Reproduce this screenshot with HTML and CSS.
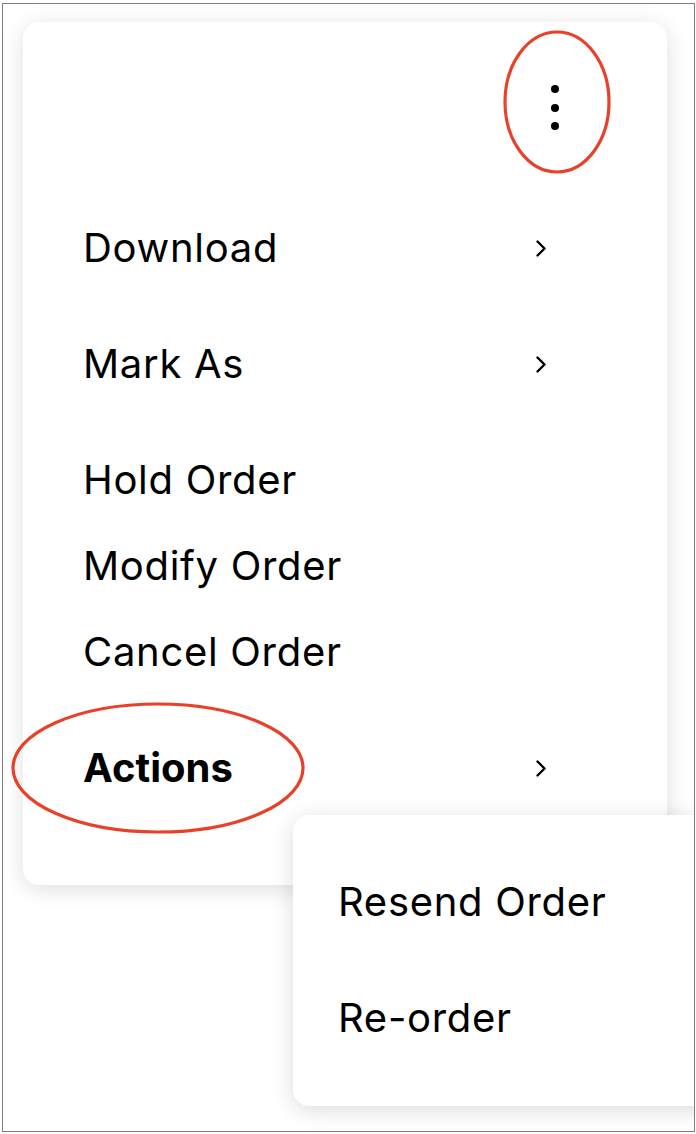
FILE: index.html
```html
<!DOCTYPE html>
<html lang="en">
<head>
<meta charset="utf-8">
<title>Order menu</title>
<link rel="stylesheet" href="styles.css">
</head>
<body>
<div class="frame">
  <div class="menu">
    <div class="menu-head">
      <button class="kebab" aria-label="More options">
        <span class="dot"></span><span class="dot"></span><span class="dot"></span>
      </button>
    </div>
    <ul class="group">
      <li class="row"><span class="label">Download</span><svg class="chev" viewBox="0 0 10 17"><path d="M1.5 1.5 L8.5 8.5 L1.5 15.5"/></svg></li>
      <li class="row"><span class="label">Mark As</span><svg class="chev" viewBox="0 0 10 17"><path d="M1.5 1.5 L8.5 8.5 L1.5 15.5"/></svg></li>
    </ul>
    <ul class="group compact">
      <li class="row"><span class="label">Hold Order</span></li>
      <li class="row"><span class="label">Modify Order</span></li>
      <li class="row"><span class="label">Cancel Order</span></li>
    </ul>
    <ul class="group">
      <li class="row active"><span class="label">Actions</span><svg class="chev" viewBox="0 0 10 17"><path d="M1.5 1.5 L8.5 8.5 L1.5 15.5"/></svg></li>
    </ul>
  </div>
  <ul class="submenu">
    <li class="row"><span class="label">Resend Order</span></li>
    <li class="row"><span class="label">Re-order</span></li>
  </ul>
  <svg class="marks" viewBox="0 0 691 1127">
    <ellipse cx="554" cy="98" rx="52" ry="70"/>
    <ellipse cx="155" cy="764" rx="145" ry="64"/>
  </svg>
</div>
</body>
</html>
```

FILE: styles.css
```css
* { box-sizing: border-box; }
html, body { margin: 0; padding: 0; background: #fff; }
body { font-family: Inter, "Noto Sans", sans-serif; color: #000; }

.frame {
  position: relative;
  margin: 3px 0 0 2px;
  width: 693px;
  height: 1129px;
  border: 1px solid #7f7f7f;
  background: #fff;
  overflow: hidden;
}

.menu {
  margin: 18px 0 0 20px;
  width: 644px;
  height: 863px;
  background: #fff;
  border-radius: 16px;
  box-shadow: 0 4px 22px rgba(0, 0, 0, 0.13);
  padding: 0 0 59px 0;
}

.menu-head {
  display: flex;
  justify-content: flex-end;
  padding: 63px 100px 0 0;
  height: 168px;
}

.kebab {
  display: flex;
  flex-direction: column;
  align-items: center;
  gap: 10.5px;
  width: 24px;
  height: 45px;
  padding: 0;
  border: 0;
  background: transparent;
}
.kebab .dot {
  width: 8px;
  height: 8px;
  border-radius: 50%;
  background: #000;
}

ul { list-style: none; margin: 0; padding: 0; }

.group .row {
  display: flex;
  align-items: center;
  justify-content: space-between;
  height: 116px;
  padding: 0 121px 0 60px;
}
.group.compact { padding: 15px 0; }
.group.compact .row { height: 86px; }

.label {
  font-size: 40px;
  line-height: 48px;
  font-weight: 400;
  letter-spacing: 0.7px;
}
.row.active .label { font-weight: 700; letter-spacing: 0; }

.chev {
  width: 10px;
  height: 17px;
  fill: none;
  stroke: #000;
  stroke-width: 2.4;
  stroke-linecap: round;
  stroke-linejoin: round;
}

.submenu {
  position: absolute;
  left: 290px;
  top: 811px;
  width: 430px;
  height: 291px;
  background: #fff;
  border-radius: 16px;
  box-shadow: 0 4px 22px rgba(0, 0, 0, 0.14);
  padding: 29px 0 30px 45px;
}
.submenu .row {
  display: flex;
  align-items: center;
  height: 116px;
}

.marks {
  position: absolute;
  left: 0;
  top: 0;
  width: 691px;
  height: 1127px;
  pointer-events: none;
  fill: none;
  stroke: #e8412a;
  stroke-width: 3.2;
}
```
